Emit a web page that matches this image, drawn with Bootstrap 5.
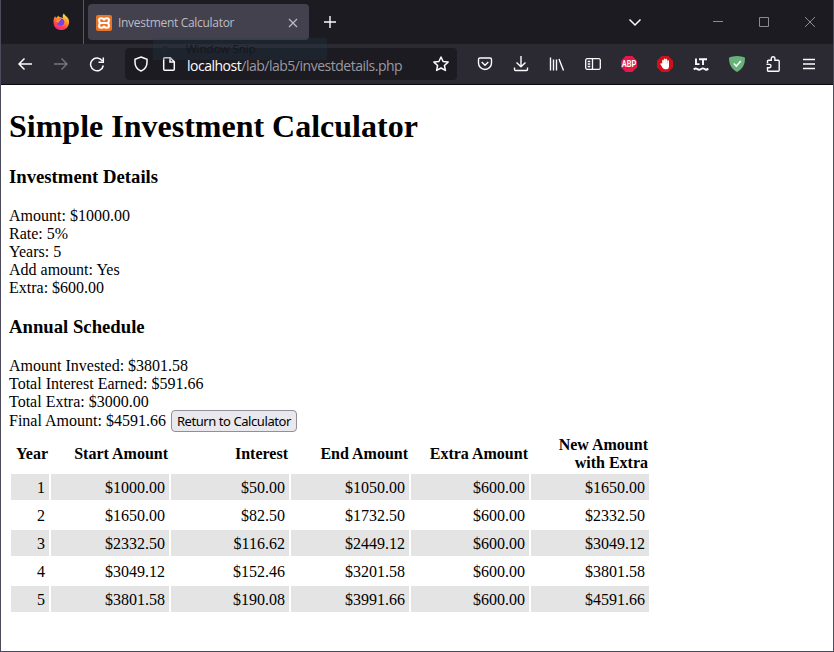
<!DOCTYPE html>
<html lang="en">
<head>
<meta charset="utf-8">
<meta name="viewport" content="width=device-width, initial-scale=1">
<title>Investment Calculator</title>
<link rel="stylesheet" href="https://cdn.jsdelivr.net/npm/bootstrap@5.3.0/dist/css/bootstrap.min.css">
<style>
body{width:834px;height:652px;overflow:hidden;background:#fff;color:#000}
.browser{height:652px;border:1px solid #4b4b5b;border-top:0}
.chrome-ui{font-family:"Open Sans","Noto Sans",sans-serif;color:#fbfbfe}
.tabstrip{height:44px;background:#1c1b22}
.pinned{width:83px;border-right:1px solid #5a5963;padding:13px 0 0 51px}
.tab{width:221px;height:36px;margin:4px 0 0 4px;padding:1px 9px 0 8px;background:#42414d;border-radius:4px;font-size:12px;color:#bdbcc4}
.tab-title{margin-left:6px;letter-spacing:-.3px}
.tabstrip svg,.toolbar svg{display:block;fill:none;stroke:currentColor}
.new-tab{margin-left:15px}
.tab-list{margin-right:53px}
.win-btn{width:46px;height:44px;color:#8d8c93}
.toolbar{height:40px;background:#2b2a33;padding:0 6px}
.tool{width:36px;height:40px}
.tool-off{color:#77767e}
.address{width:332px;height:32px;margin:0 10px;background:#1c1b22;border-radius:4px}
.page-icon{margin-left:12px}
.url{font-size:14px;line-height:17px;padding-top:2px;color:#9a99a1;margin-left:10px;letter-spacing:-.49px}
.url b{font-weight:400;color:#fbfbfe}
.snip{left:152px;top:38px;width:174px;height:22px;padding-left:33px;background:rgba(38,58,73,.3);font-size:11.5px;line-height:21px;color:#15151c}
.snip::before{content:"";position:absolute;left:9px;top:8px;width:6px;height:6px;border-radius:50%;background:#1c2733}
.page{border-top:1px solid #0c0c0d;padding:0 8px;font:16px/18px "Liberation Serif",serif}
.page h1{font-size:32px;line-height:37px;font-weight:700;margin:23px 0 21px}
.page h3{font-size:18.72px;line-height:22px;font-weight:700;margin:0 0 19px}
.page .annual{margin-top:19px}
.return{font:13px/18px "Noto Sans",sans-serif;height:22px;width:126px;margin:-1px 0 0 1px;padding:0;border:1px solid #8f8f9d;border-radius:4px;background:#e9e9ed;color:#000;letter-spacing:-.43px;white-space:nowrap;vertical-align:baseline}
.schedule{width:642px;table-layout:fixed;border-collapse:separate;border-spacing:2px;text-align:right}
.schedule th{padding:2px 1px 0;vertical-align:middle;height:38px}
.schedule td{padding:5px 4px 3px;height:26px}
.schedule tbody tr:nth-child(odd) td{background:#e4e4e4}
.year{width:38px}
</style>
</head>
<body>
<div class="browser position-relative">
 <div class="chrome-ui">
  <div class="tabstrip d-flex">
   <div class="pinned flex-shrink-0">
    <svg width="18" height="18" viewBox="0 0 18 18"><defs><linearGradient id="fx" x1=".8" y1="0" x2=".3" y2="1"><stop offset="0" stop-color="#fff04a"/><stop offset=".4" stop-color="#ff9a28"/><stop offset=".75" stop-color="#ff4050"/><stop offset="1" stop-color="#e32a8a"/></linearGradient></defs><path stroke="none" fill="url(#fx)" d="M1.500 9C1.300 6.500 2 4.500 3.200 3.200L4 5c1-.8 1.500-1 2-2.500.6 1 1.500 1.500 2.500 1.800L11 5c-.6-1.700-.2-3.200.8-4.500 1 2 3.700 3.200 4.700 5.500 1.200 3 .5 6.500-1.500 8.700-3 3.200-8.500 3-11.300.2C2.200 13.400 1.500 11.500 1.500 9z"/><circle cx="8.700" cy="9" r="3.600" fill="#7542e5" stroke="none"/><path stroke="none" fill="#ff9130" d="M4.500 6l4.500.2c0 1.300-2 1.500-2 2.800 0 1-2 1-2.500 0z"/></svg>
   </div>
   <div class="tab d-flex align-items-center flex-shrink-0">
    <svg width="16" height="16" viewBox="0 0 16 16"><rect width="16" height="16" rx="2" fill="#ec7426" stroke="none"/><path stroke="#fff" stroke-width="2" stroke-linejoin="round" d="M8 4.600C7.300 3.500 6.500 3.200 5.300 3.200 3.800 3.200 3 4.100 3 5.400c0 1.200.5 2 1.600 2.600C3.500 8.600 3 9.400 3 10.600c0 1.300.8 2.200 2.300 2.200 1.200 0 2-.3 2.700-1.400.7 1.100 1.500 1.400 2.700 1.400 1.500 0 2.300-.9 2.300-2.200 0-1.200-.5-2-1.600-2.600C12.500 7.400 13 6.600 13 5.400c0-1.300-.8-2.200-2.300-2.200C9.500 3.200 8.700 3.500 8 4.600zM5.500 8h5"/></svg>
    <span class="tab-title text-nowrap">Investment Calculator</span>
    <svg class="ms-auto" width="14" height="14" viewBox="0 0 14 14" stroke-width="1.200"><path d="M3 3l8 8M11 3l-8 8"/></svg>
   </div>
   <div class="new-tab d-flex align-items-center"><svg width="12" height="12" viewBox="0 0 12 12" stroke-width="1.400"><path d="M6 0v12M0 6h12"/></svg></div>
   <div class="d-flex align-items-center ms-auto">
    <svg class="tab-list" width="14" height="14" viewBox="0 0 14 14" stroke-width="1.500"><path d="M1.500 4.500L7 10l5.500-5.500"/></svg>
    <div class="win-btn d-flex align-items-center justify-content-center"><svg width="12" height="12"><path d="M1 5.500h10"/></svg></div>
    <div class="win-btn d-flex align-items-center justify-content-center"><svg width="12" height="12"><path d="M1.500 1.500h9v9h-9z"/></svg></div>
    <div class="win-btn d-flex align-items-center justify-content-center"><svg width="12" height="12"><path d="M1 1l10 10M11 1L1 11"/></svg></div>
   </div>
  </div>
  <div class="toolbar d-flex align-items-center">
   <div class="tool d-flex align-items-center justify-content-center"><svg width="16" height="16" stroke-width="1.500"><path d="M15 8H2M7.500 2.500L2 8l5.500 5.500"/></svg></div>
   <div class="tool tool-off d-flex align-items-center justify-content-center"><svg width="16" height="16" stroke-width="1.400"><path d="M1 8h13M8.500 2.500L14 8l-5.500 5.500"/></svg></div>
   <div class="tool d-flex align-items-center justify-content-center"><svg width="16" height="16" stroke-width="1.500"><path d="M13.300 4.800A6.400 6.400 0 1 0 14.300 9.500M9.500 6.300H14.300V1.500"/></svg></div>
   <div class="address d-flex align-items-center flex-shrink-0">
    <svg class="ms-2" width="16" height="16" stroke-width="1.500"><path d="M8 1l6 2.300v3C14 10 12 13.500 8 15 4 13.500 2 10 2 6.300v-3z"/></svg>
    <svg class="page-icon" width="16" height="16" stroke-width="1.500"><path d="M3.700 1.700h5.600l4 4v7.600a1 1 0 0 1-1 1H3.700a1 1 0 0 1-1-1V2.700a1 1 0 0 1 1-1zM9 2v4h4"/></svg>
    <span class="url text-nowrap"><b>localhost</b>/lab/lab5/investdetails.php</span>
    <svg class="ms-auto me-2" width="16" height="16" stroke-width="1.500" stroke-linejoin="round"><path d="M8 1l2.100 4.500 5 .6-3.700 3.400 1 4.900L8 12l-4.400 2.400 1-4.900L.9 6.100l5-.6z"/></svg>
   </div>
   <div class="tool d-flex align-items-center justify-content-center"><svg width="16" height="16" stroke-width="1.400"><path d="M3 2h10a1.500 1.500 0 0 1 1.500 1.500V7a6.500 6.500 0 0 1-13 0V3.500A1.500 1.500 0 0 1 3 2zM4.700 6L8 9.200 11.300 6"/></svg></div>
   <div class="tool d-flex align-items-center justify-content-center"><svg width="16" height="16" stroke-width="1.400"><path d="M8 0v10.500M3.500 6.500L8 10.800l4.500-4.300M1.500 11.500v2a1 1 0 0 0 1 1h11a1 1 0 0 0 1-1v-2"/></svg></div>
   <div class="tool d-flex align-items-center justify-content-center"><svg width="16" height="16" stroke-width="1.400"><path d="M1.500 1.500v13M4.500 3.500v11M7.500 3.500v11M10 3l4.500 11.500"/></svg></div>
   <div class="tool d-flex align-items-center justify-content-center"><svg width="16" height="16" stroke-width="1.300"><path d="M2.200 2.700h11.600a1.500 1.500 0 0 1 1.500 1.500v7.600a1.500 1.500 0 0 1-1.500 1.500H2.200a1.500 1.500 0 0 1-1.500-1.500V4.200a1.500 1.500 0 0 1 1.500-1.500zM7.500 3v10M2.700 5.500h2.600M2.700 8h2.600M2.700 10.500h2.600"/></svg></div>
   <div class="tool d-flex align-items-center justify-content-center"><svg width="16" height="16"><path stroke="none" fill="#e8174b" d="M4.700 0h6.600L16 4.700v6.600L11.300 16H4.700L0 11.300V4.700z"/><text x="8" y="11.200" text-anchor="middle" textLength="14.500" lengthAdjust="spacingAndGlyphs" font-family="Roboto,sans-serif" font-weight="700" font-size="8.800" fill="#fff" stroke="none">ABP</text></svg></div>
   <div class="tool d-flex align-items-center justify-content-center"><svg width="16" height="16"><path stroke="none" fill="#d3101a" d="M4.700 0h6.600L16 4.700v6.600L11.300 16H4.700L0 11.300V4.700z"/><path stroke="#fff" stroke-width="1.600" stroke-linecap="round" d="M6 9V4.500M7.700 8V3.200M9.400 8V3.600M11.200 9V5M4.200 8l2 3"/><path stroke="none" fill="#fff" d="M5.200 7.500H12v3c0 1.500-1 2.800-2.500 2.800H8c-1.500 0-2.800-2-2.800-3z"/></svg></div>
   <div class="tool d-flex align-items-center justify-content-center"><svg width="16" height="16" stroke-width="1.900"><path d="M3 2.500v5.600h3.500M6 3.200h8M10 3.200v5.800M.8 13.500c1.400-1.500 2.200-1.500 3.500-.4s2.300 1 3.700 0 2.400-1.100 3.700 0 2.100 1 3.500-.6"/></svg></div>
   <div class="tool d-flex align-items-center justify-content-center"><svg width="16" height="16"><path stroke="none" fill="#67b279" d="M8 0c3 0 6 .7 8 1.800C16 8 14 13 8 16 2 13 0 8 0 1.800 2 .7 5 0 8 0z"/><path stroke="#fff" stroke-width="1.500" d="M4.800 7.500l2.500 2.600 4.500-5.200"/></svg></div>
   <div class="tool d-flex align-items-center justify-content-center"><svg width="16" height="16" stroke-width="1.400"><path d="M2.500 7.200V5.300a1 1 0 0 1 1-1h2.800V2.600a1.800 1.800 0 0 1 3.600 0v1.700h3.300a1 1 0 0 1 1 1v8.900a1 1 0 0 1-1 1H3.500a1 1 0 0 1-1-1v-2.400h1.800a1.700 1.700 0 0 0 0-3.400H1.500"/></svg></div>
   <div class="tool d-flex align-items-center justify-content-center"><svg width="16" height="16" stroke-width="1.400"><path d="M2 3.500h12M2 8h12M2 12.500h12"/></svg></div>
  </div>
  <div class="snip position-absolute">Window Snip</div>
 </div>
 <main class="page">
  <h1>Simple Investment Calculator</h1>
  <h3>Investment Details</h3>
  <div>Amount: $1000.00<br>Rate: 5%<br>Years: 5<br>Add amount: Yes<br>Extra: $600.00</div>
  <h3 class="annual">Annual Schedule</h3>
  <div>Amount Invested: $3801.58<br>Total Interest Earned: $591.66<br>Total Extra: $3000.00<br>Final Amount: $4591.66 <button class="return" type="button">Return to Calculator</button></div>
  <table class="schedule">
   <colgroup><col class="year"><col><col><col><col><col></colgroup>
   <thead><tr><th>Year</th><th>Start Amount</th><th>Interest</th><th>End Amount</th><th>Extra Amount</th><th>New Amount with Extra</th></tr></thead>
   <tbody>
    <tr><td>1</td><td>$1000.00</td><td>$50.00</td><td>$1050.00</td><td>$600.00</td><td>$1650.00</td></tr>
    <tr><td>2</td><td>$1650.00</td><td>$82.50</td><td>$1732.50</td><td>$600.00</td><td>$2332.50</td></tr>
    <tr><td>3</td><td>$2332.50</td><td>$116.62</td><td>$2449.12</td><td>$600.00</td><td>$3049.12</td></tr>
    <tr><td>4</td><td>$3049.12</td><td>$152.46</td><td>$3201.58</td><td>$600.00</td><td>$3801.58</td></tr>
    <tr><td>5</td><td>$3801.58</td><td>$190.08</td><td>$3991.66</td><td>$600.00</td><td>$4591.66</td></tr>
   </tbody>
  </table>
 </main>
</div>
<script src="https://cdn.jsdelivr.net/npm/bootstrap@5.3.0/dist/js/bootstrap.bundle.min.js"></script>
</body>
</html>
